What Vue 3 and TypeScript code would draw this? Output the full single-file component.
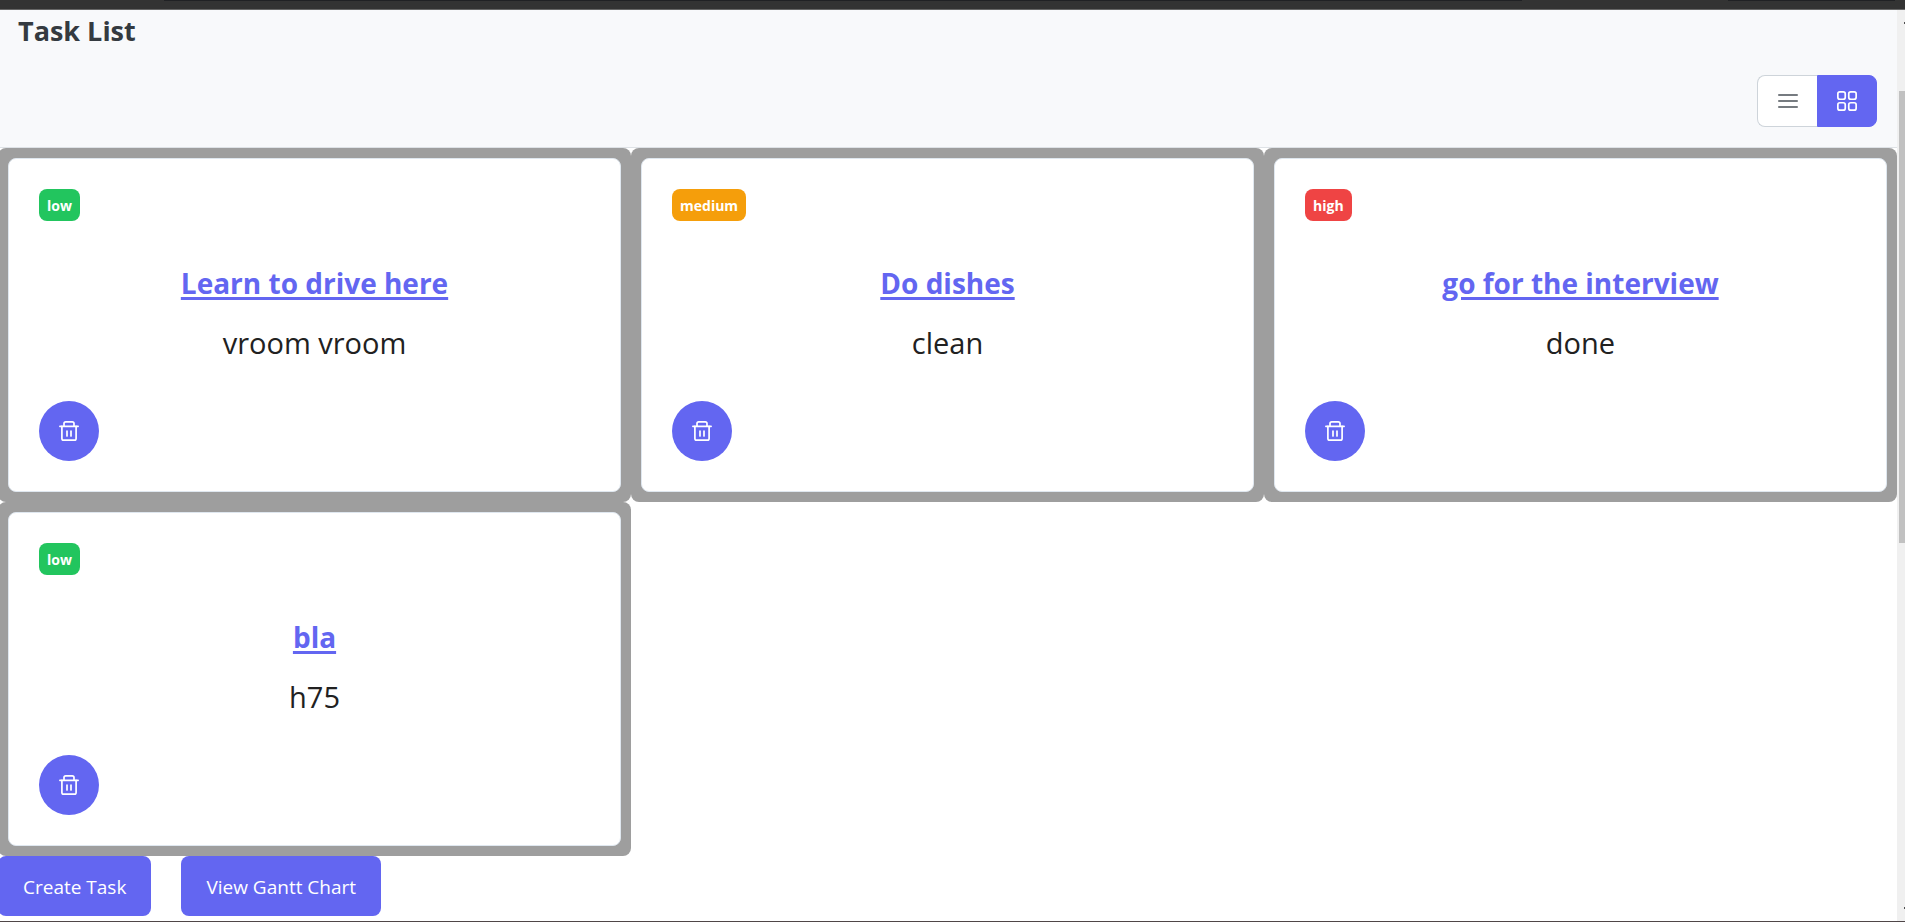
<script setup lang="ts">
import { ref } from 'vue'

type Priority = 'low' | 'medium' | 'high'
interface Task {
  id: number
  title: string
  description: string
  priority: Priority
}

const layout = ref<'list' | 'grid'>('grid')
const tasks = ref<Task[]>([
  { id: 1, title: 'Learn to drive here', description: 'vroom vroom', priority: 'low' },
  { id: 2, title: 'Do dishes', description: 'clean', priority: 'medium' },
  { id: 3, title: 'go for the interview', description: 'done', priority: 'high' },
  { id: 4, title: 'bla', description: 'h75', priority: 'low' },
])

function removeTask(id: number) {
  tasks.value = tasks.value.filter((t) => t.id !== id)
}
</script>

<template>
  <div class="window">
    <div class="topbar"><span class="tab wide"></span><span class="tab"></span></div>
    <div class="viewport">
      <main class="page">
        <header class="header">
          <h1>Task List</h1>
          <div class="toggle" role="group" aria-label="Layout">
            <button type="button" aria-label="List" :class="{ active: layout === 'list' }" @click="layout = 'list'">
              <svg width="20" height="20" viewBox="0 0 20 20" fill="none" stroke="currentColor" stroke-width="1.6" stroke-linecap="round">
                <path d="M0.8 4H19.2M0.8 10H19.2M0.8 16H19.2" />
              </svg>
            </button>
            <button type="button" aria-label="Grid" :class="{ active: layout === 'grid' }" @click="layout = 'grid'">
              <svg width="20" height="20" viewBox="0 0 20 20" fill="none" stroke="currentColor" stroke-width="1.7">
                <rect x="0.85" y="0.85" width="7.4" height="7.4" rx="2" />
                <rect x="11.75" y="0.85" width="7.4" height="7.4" rx="2" />
                <rect x="0.85" y="11.75" width="7.4" height="7.4" rx="2" />
                <rect x="11.75" y="11.75" width="7.4" height="7.4" rx="2" />
              </svg>
            </button>
          </div>
        </header>
        <section class="tasks" :class="layout">
          <div v-for="task in tasks" :key="task.id" class="cell">
            <article class="card">
              <span class="badge" :class="task.priority">{{ task.priority }}</span>
              <div class="body">
                <a href="#" class="title">{{ task.title }}</a>
                <p class="description">{{ task.description }}</p>
              </div>
              <button type="button" class="trash" :aria-label="`Delete ${task.title}`" @click="removeTask(task.id)">
                <svg width="20" height="20" viewBox="0 0 20 20" fill="none" stroke="currentColor" stroke-width="1.7" stroke-linecap="round" stroke-linejoin="round">
                  <path d="M0.9 5.3H19.1" />
                  <path d="M2.9 5.3V17.4Q2.9 19.1 4.6 19.1H15.4Q17.1 19.1 17.1 17.4V5.3" />
                  <path d="M5 5V2.6Q5 0.9 6.7 0.9H13.3Q15 0.9 15 2.6V5" />
                  <path d="M8 10V15M12 10V15" />
                </svg>
              </button>
            </article>
          </div>
        </section>
        <div class="actions">
          <button type="button">Create Task</button>
          <button type="button">View Gantt Chart</button>
        </div>
      </main>
      <div class="scrollbar" aria-hidden="true">
        <span class="arrow"></span>
        <span class="thumb"></span>
        <span class="arrow"></span>
      </div>
    </div>
  </div>
</template>

<style>
body {
  margin: 0;
  background: #fff;
}
</style>

<style scoped>
* {
  box-sizing: border-box;
}
.window {
  display: flex;
  flex-direction: column;
  height: 100vh;
  overflow: hidden;
  border-bottom: 1px solid #4f4648;
  font-family: 'Open Sans', 'Noto Sans', sans-serif;
}
button {
  font: inherit;
  cursor: pointer;
}
.topbar {
  flex: none;
  display: flex;
  gap: 206px;
  height: 10px;
  padding: 0 10px 0 164px;
  background: #333;
  border-bottom: 1px solid #666;
}
.tab {
  width: 167px;
  height: 1px;
  background: #202124;
}
.tab.wide {
  flex: 1;
}
.viewport {
  flex: 1;
  min-height: 0;
  display: flex;
}
.page {
  flex: 1;
  min-width: 0;
  overflow: hidden;
}
.header {
  padding: 0 20px 20px 18px;
  background: #f8f9fb;
  border-bottom: 1px solid #dee2e6;
}
h1 {
  margin: 0 0 23px;
  font-size: 27px;
  line-height: 42px;
  font-weight: 700;
  color: #343a40;
}
.toggle {
  display: flex;
  justify-content: flex-end;
}
.toggle button {
  display: flex;
  align-items: center;
  justify-content: center;
  width: 60px;
  height: 52px;
  padding: 0;
  border: 1px solid #ced4da;
  background: #fff;
  color: #495057;
}
.toggle button:first-child {
  border-right: 0;
  border-radius: 8px 0 0 8px;
}
.toggle button:last-child {
  border-radius: 0 8px 8px 0;
}
.toggle button.active {
  background: #6366f1;
  border-color: #6366f1;
  color: #fff;
}
.tasks {
  display: grid;
  margin-left: -2px;
}
.tasks.grid {
  grid-template-columns: repeat(3, 1fr);
}
.cell {
  padding: 10px;
  background: #9e9e9e;
  border-radius: 8px;
}
.card {
  display: flex;
  flex-direction: column;
  align-items: flex-start;
  padding: 30px;
  background: #fff;
  border: 1px solid #dfe7ef;
  border-radius: 8px;
}
.badge {
  padding: 6px 8px 4px;
  border-radius: 8px;
  font-size: 14px;
  line-height: 22px;
  font-weight: 700;
  color: #fff;
}
.badge.low {
  background: #22c55e;
}
.badge.medium {
  background: #f59e0b;
}
.badge.high {
  background: #ef4444;
}
.body {
  display: flex;
  flex-direction: column;
  align-items: center;
  align-self: stretch;
  gap: 20px;
  padding: 42px 0 38px;
  line-height: 40px;
}
.title {
  font-size: 28px;
  font-weight: 700;
  color: #6366f1;
  text-decoration: underline;
  text-decoration-thickness: 3px;
  text-underline-offset: 3px;
}
.description {
  margin: 0;
  font-size: 29px;
  font-weight: 500;
  color: #212121;
}
.trash {
  display: flex;
  align-items: center;
  justify-content: center;
  width: 60px;
  height: 60px;
  padding: 0;
  border: 0;
  border-radius: 50%;
  background: #6366f1;
  color: #fff;
}
.actions {
  display: flex;
  gap: 30px;
  margin-left: -2px;
}
.actions button {
  padding: 18px 25px 15px;
  border: 0;
  border-radius: 8px;
  background: #6366f1;
  color: #fff;
  font-size: 19px;
  line-height: 27px;
}
.scrollbar {
  flex: none;
  display: flex;
  flex-direction: column;
  align-items: flex-end;
  width: 8px;
  padding: 12px 0;
  background: #f0f0f0;
}
.thumb {
  width: 6px;
  height: 51%;
  margin: 67px 0 auto;
  background: #c1c1c1;
}
.arrow {
  width: 1px;
  height: 2px;
  background: #505050;
}
</style>
